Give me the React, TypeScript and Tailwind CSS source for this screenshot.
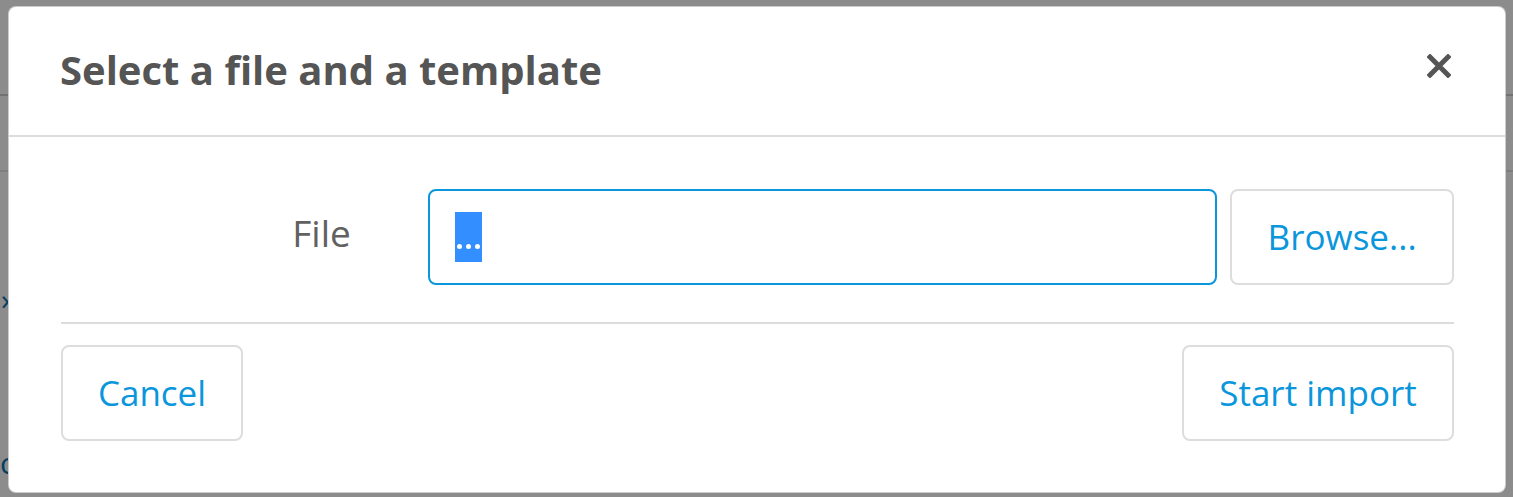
import React from "react";

export default function App() {
  return (
    <div className="relative w-[1513px] h-[497px] overflow-hidden bg-white" style={{ fontFamily: '"Open Sans", "Liberation Sans", sans-serif' }}>
      {/* underlying page */}
      <div className="h-[96px] border-b-2 border-[#cfcfcf]" />
      <div className="h-[76px] border-b-2 border-[#e5e5e5]" />
      <div className="pt-[112px] pl-[1px] text-[#0a74b0] text-[30px] leading-none">›</div>
      <div className="pt-[134px] text-[#0a74b0] text-[30px] leading-none">o</div>
      {/* overlay */}
      <div className="absolute inset-0 bg-black/45" />
      {/* modal */}
      <div className="absolute left-[8px] top-[6px] w-[1498px] h-[487px] bg-white rounded-[8px] border border-black/20 flex flex-col">
        <div className="h-[130px] flex items-center justify-between pl-[51px] pr-[54px] border-b-2 border-[#dcdcdc]">
          <h1 className="text-[40px] font-bold text-[#555555] mt-[-2px]">Select a file and a template</h1>
          <svg width="24" height="24" viewBox="0 0 24 24" className="mt-[-10px]">
            <path d="M3 3 L21 21 M21 3 L3 21" stroke="#555555" strokeWidth="5" strokeLinecap="square" />
          </svg>
        </div>
        <div className="pl-[52px] pr-[51px] pt-[52px]">
          <div className="flex items-center">
            <div className="w-[291px] text-right text-[37px] text-[#616161] pr-[1px] mb-[8px]">File</div>
            <div className="ml-[76px] w-[790px] h-[96px] border-2 border-[#0a96dc] rounded-[8px] flex items-center pl-[25px]">
              <span className="bg-[#338fff] h-[50px] w-[27px] flex items-end justify-center gap-[4px] pb-[13px]">
                <span className="w-[5px] h-[5px] rounded-full bg-white" />
                <span className="w-[5px] h-[5px] rounded-full bg-white" />
                <span className="w-[5px] h-[5px] rounded-full bg-white" />
              </span>
            </div>
            <button className="ml-[13px] w-[224px] h-[96px] border-2 border-[#dddddd] rounded-[8px] text-[#0a96dc] text-[35px] flex items-center justify-center">Browse...</button>
          </div>
          <div className="mt-[37px] h-[2px] bg-[#dcdcdc]" />
          <div className="mt-[21px] flex justify-between">
            <button className="w-[182px] h-[96px] border-2 border-[#dddddd] rounded-[8px] text-[#0a96dc] text-[35px] flex items-center justify-center">Cancel</button>
            <button className="w-[272px] h-[96px] border-2 border-[#dddddd] rounded-[8px] text-[#0a96dc] text-[35px] flex items-center justify-center">Start import</button>
          </div>
        </div>
      </div>
    </div>
  );
}
